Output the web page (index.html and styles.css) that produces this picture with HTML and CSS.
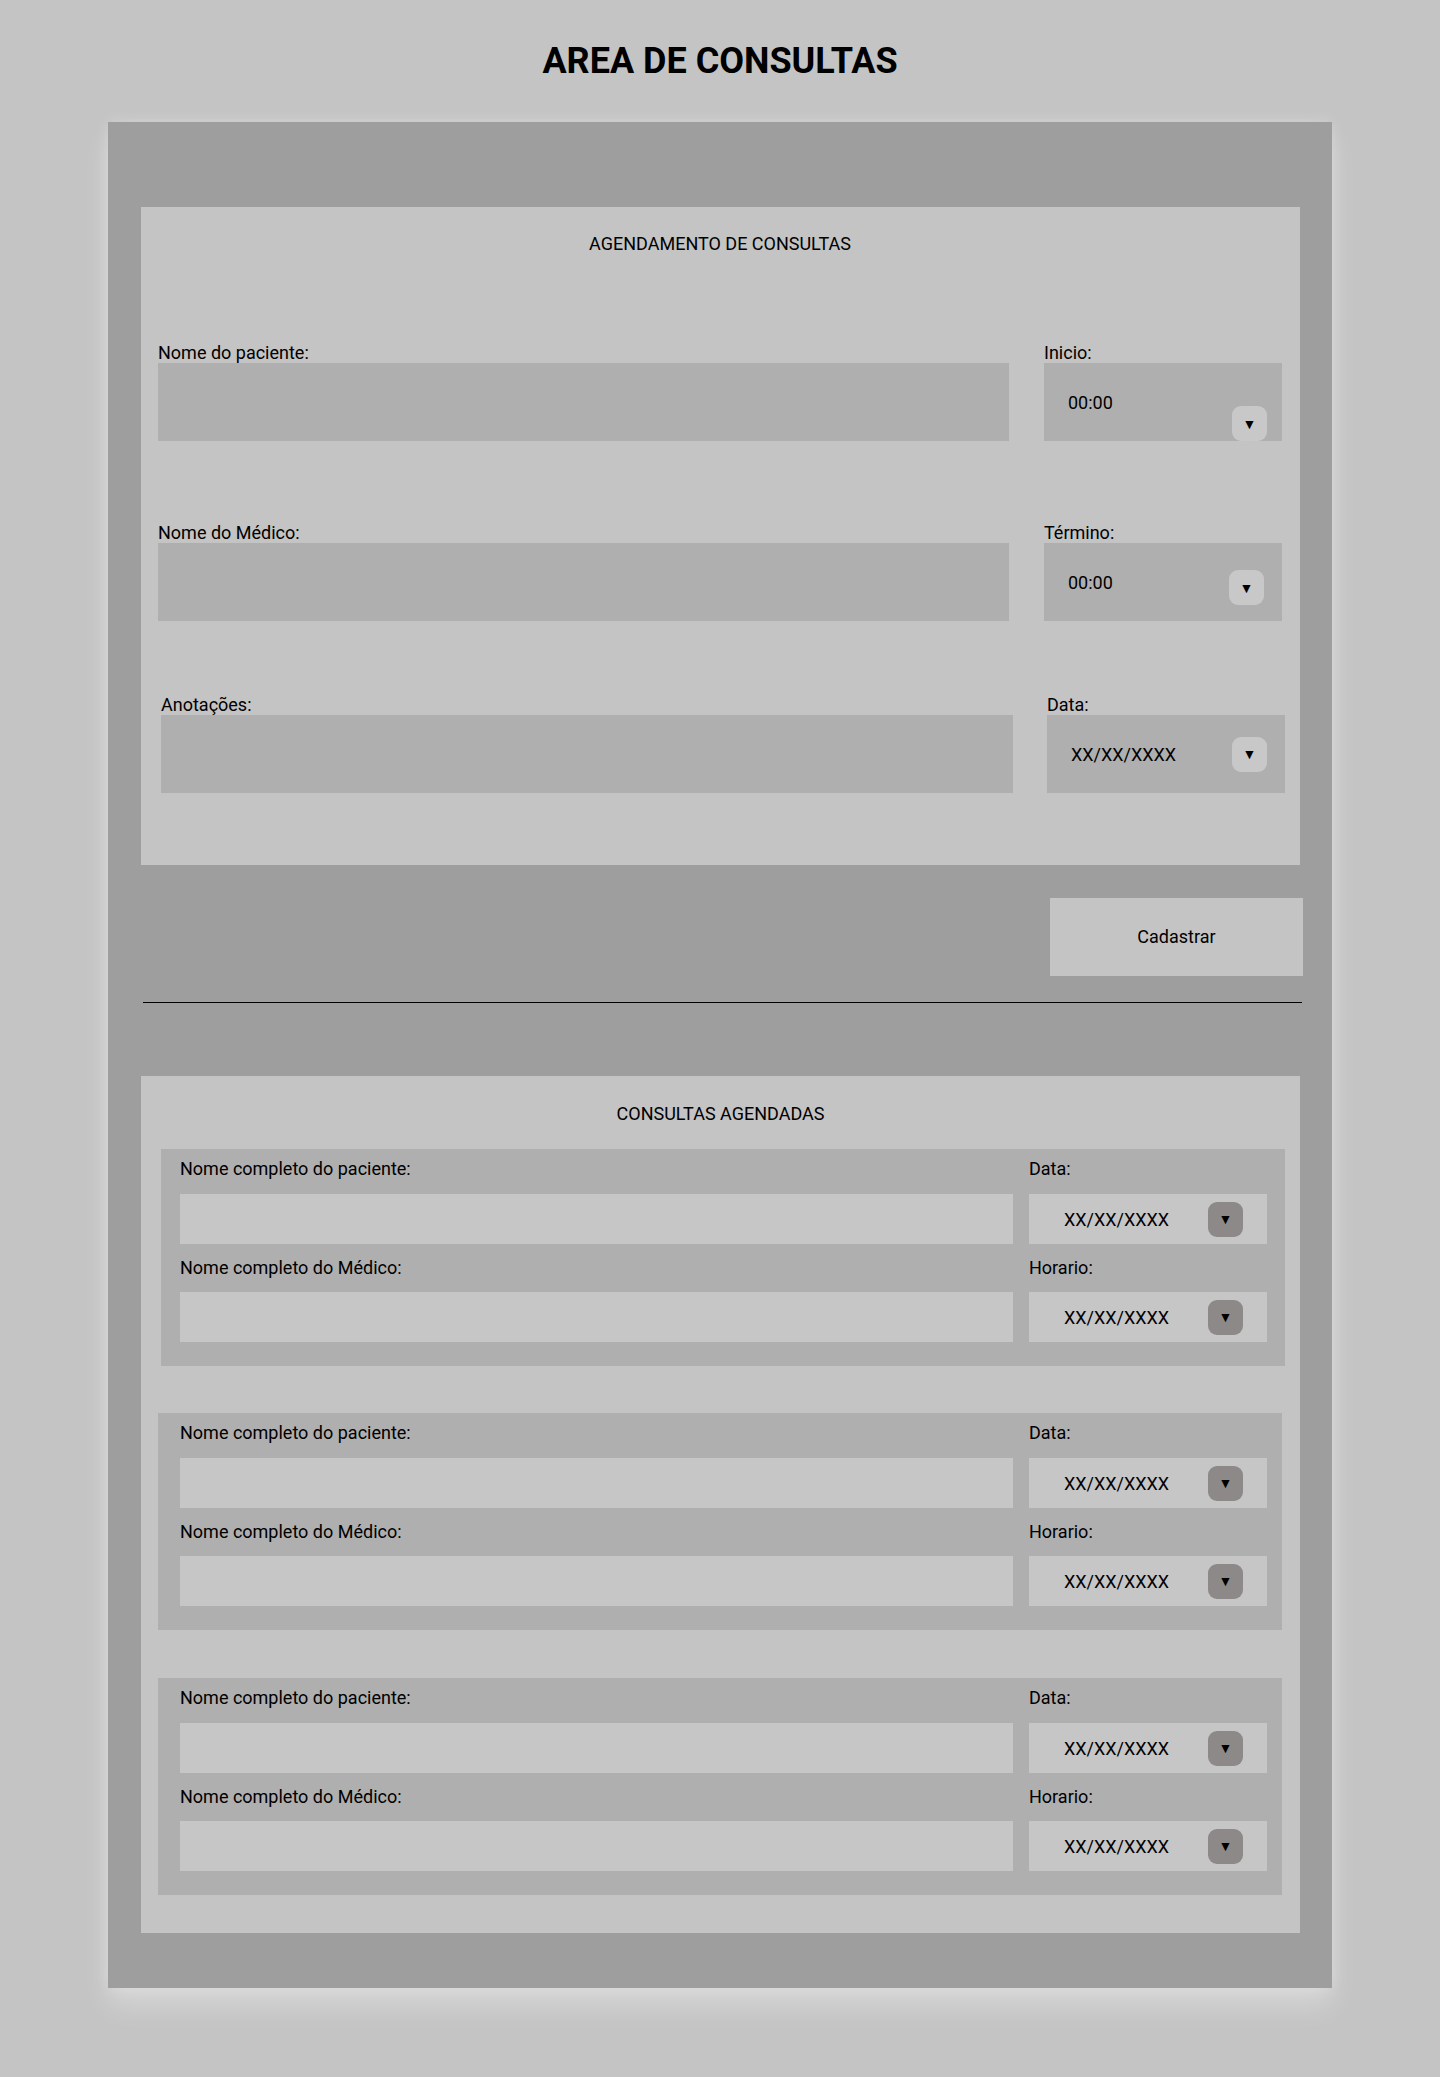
FILE: index.html
```html
<!DOCTYPE html>
<html lang="pt-BR">
<head>
<meta charset="utf-8">
<title>Area de Consultas</title>
<link rel="stylesheet" href="styles.css">
</head>
<body>
<h1 class="page-title">AREA DE CONSULTAS</h1>
<main class="panel">
  <section class="card card-form">
    <h2 class="card-title">AGENDAMENTO DE CONSULTAS</h2>

    <div class="form-row row-1">
      <div class="field field-main">
        <label class="field-label">Nome do paciente:</label>
        <div class="text-input"></div>
      </div>
      <div class="field field-side">
        <label class="field-label">Inicio:</label>
        <div class="select-box">
          <span class="select-value">00:00</span>
          <span class="drop-btn drop-bottom">&#9660;</span>
        </div>
      </div>
    </div>

    <div class="form-row row-2">
      <div class="field field-main">
        <label class="field-label">Nome do Médico:</label>
        <div class="text-input"></div>
      </div>
      <div class="field field-side">
        <label class="field-label">Término:</label>
        <div class="select-box">
          <span class="select-value">00:00</span>
          <span class="drop-btn drop-low">&#9660;</span>
        </div>
      </div>
    </div>

    <div class="form-row row-3">
      <div class="field field-main field-wide">
        <label class="field-label">Anotações:</label>
        <div class="text-input"></div>
      </div>
      <div class="field field-side">
        <label class="field-label">Data:</label>
        <div class="select-box">
          <span class="select-value">XX/XX/XXXX</span>
          <span class="drop-btn drop-center">&#9660;</span>
        </div>
      </div>
    </div>
  </section>

  <div class="actions">
    <button class="btn-cadastrar" type="button">Cadastrar</button>
  </div>

  <div class="divider"></div>

  <section class="card card-list">
    <h2 class="card-title">CONSULTAS AGENDADAS</h2>

    <div class="entry entry-first">
      <div class="entry-label">Nome completo do paciente:</div>
      <div class="entry-label">Data:</div>
      <div class="entry-input"></div>
      <div class="entry-select"><span class="entry-value">XX/XX/XXXX</span><span class="drop-dark">&#9660;</span></div>
      <div class="entry-label entry-label-2">Nome completo do Médico:</div>
      <div class="entry-label entry-label-2">Horario:</div>
      <div class="entry-input"></div>
      <div class="entry-select"><span class="entry-value">XX/XX/XXXX</span><span class="drop-dark">&#9660;</span></div>
    </div>

    <div class="entry entry-next">
      <div class="entry-label">Nome completo do paciente:</div>
      <div class="entry-label">Data:</div>
      <div class="entry-input"></div>
      <div class="entry-select"><span class="entry-value">XX/XX/XXXX</span><span class="drop-dark">&#9660;</span></div>
      <div class="entry-label entry-label-2">Nome completo do Médico:</div>
      <div class="entry-label entry-label-2">Horario:</div>
      <div class="entry-input"></div>
      <div class="entry-select"><span class="entry-value">XX/XX/XXXX</span><span class="drop-dark">&#9660;</span></div>
    </div>

    <div class="entry entry-next entry-last">
      <div class="entry-label">Nome completo do paciente:</div>
      <div class="entry-label">Data:</div>
      <div class="entry-input"></div>
      <div class="entry-select"><span class="entry-value">XX/XX/XXXX</span><span class="drop-dark">&#9660;</span></div>
      <div class="entry-label entry-label-2">Nome completo do Médico:</div>
      <div class="entry-label entry-label-2">Horario:</div>
      <div class="entry-input"></div>
      <div class="entry-select"><span class="entry-value">XX/XX/XXXX</span><span class="drop-dark">&#9660;</span></div>
    </div>
  </section>
</main>
</body>
</html>
```

FILE: styles.css
```css
html {
  background: #c4c4c4;
}

body {
  margin: 0;
  padding-bottom: 90px;
  background: #c4c4c4;
  font-family: Roboto, "Liberation Sans", Arial, sans-serif;
  color: #000;
}

.page-title {
  margin: 40px 0 40px;
  font-size: 36px;
  line-height: 42px;
  font-weight: 700;
  text-align: center;
}

.panel {
  display: flex;
  flex-direction: column;
  width: 1224px;
  margin: 0 auto;
  padding: 85px 0 55px;
  box-sizing: border-box;
  background: #9e9e9e;
  box-shadow: 0 0 14px rgba(255, 255, 255, 0.25), 0 18px 26px rgba(255, 255, 255, 0.3);
}

.card {
  width: 1159px;
  margin-left: 33px;
  box-sizing: border-box;
  background: #c4c4c4;
}

.card-title {
  margin: 0;
  font-size: 18px;
  line-height: 21px;
  font-weight: 400;
  text-align: center;
}

/* ---------- form card ---------- */
.card-form {
  padding: 26px 18px 72px 17px;
}

.form-row {
  display: flex;
  gap: 35px;
}

.row-1 { margin-top: 89px; }
.row-2 { margin-top: 82px; }
.row-3 { margin-top: 74px; margin-left: 3px; gap: 34px; }

.field {
  display: flex;
  flex-direction: column;
  flex-shrink: 0;
}

.field-main { width: 851px; }
.field-wide { width: 852px; }
.field-side { width: 238px; }

.field-label {
  display: block;
  height: 20px;
  font-size: 18px;
  line-height: 20px;
}

.text-input {
  height: 78px;
  background: #afafaf;
}

.select-box {
  display: flex;
  align-items: center;
  height: 78px;
  padding-left: 24px;
  box-sizing: border-box;
  background: #afafaf;
  font-size: 18px;
}

.select-value {
  line-height: 21px;
}

.drop-btn {
  display: flex;
  align-items: center;
  justify-content: center;
  width: 35px;
  height: 35px;
  margin-left: auto;
  border-radius: 9px;
  background: #c8c8c8;
  font-size: 14px;
  line-height: 1;
}

.drop-bottom {
  align-self: flex-end;
  margin-right: 15px;
}

.drop-low {
  align-self: flex-start;
  margin-top: 27px;
  margin-right: 18px;
}

.drop-center {
  margin-right: 18px;
}

/* ---------- actions ---------- */
.actions {
  display: flex;
  justify-content: flex-end;
  margin-top: 33px;
  padding-right: 29px;
}

.btn-cadastrar {
  width: 253px;
  height: 78px;
  border: none;
  background: #c4c4c4;
  font-family: Roboto, "Liberation Sans", Arial, sans-serif;
  font-size: 18px;
  color: #000;
  padding: 0 0 2px;
}

.divider {
  width: 1159px;
  height: 1px;
  margin: 26px 0 0 35px;
  background: #000;
}

/* ---------- list card ---------- */
.card-list {
  margin-top: 73px;
  padding: 27px 0 38px;
}

.entry {
  display: grid;
  grid-template-columns: 833px 238px;
  column-gap: 16px;
  box-sizing: border-box;
  background: #afafaf;
  padding-bottom: 24px;
}

.entry-first {
  width: 1124px;
  margin: 25px 0 0 20px;
  padding-left: 19px;
  padding-right: 18px;
}

.entry-next {
  width: 1124px;
  margin: 47px 0 0 17px;
  padding-left: 22px;
  padding-right: 15px;
}

.entry-last {
  margin-top: 48px;
}

.entry-label {
  padding: 10px 0 15px;
  font-size: 18px;
  line-height: 20px;
}

.entry-label-2 {
  padding: 14px 0 14px;
}

.entry-input {
  height: 50px;
  background: #c6c6c6;
}

.entry-select {
  display: flex;
  align-items: center;
  height: 50px;
  padding-left: 35px;
  box-sizing: border-box;
  background: #c6c6c6;
  font-size: 18px;
}

.entry-value {
  line-height: 21px;
}

.drop-dark {
  display: flex;
  align-items: center;
  justify-content: center;
  width: 35px;
  height: 35px;
  margin-left: auto;
  margin-right: 24px;
  border-radius: 9px;
  background: #8e8989;
  font-size: 14px;
  line-height: 1;
}
```
